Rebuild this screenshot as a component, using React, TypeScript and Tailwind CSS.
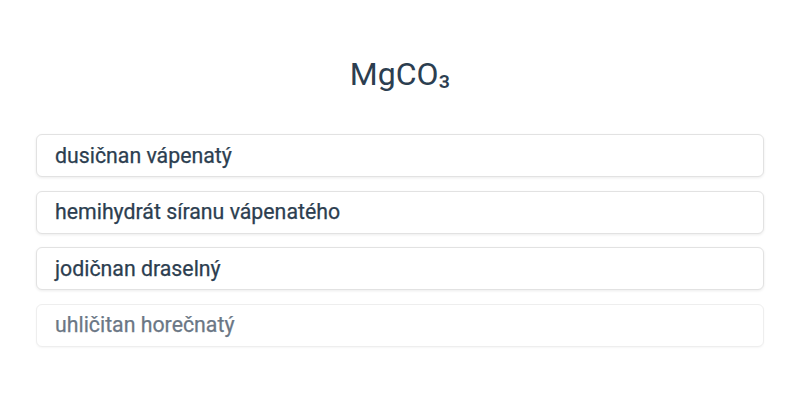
const options = [
  { label: 'dusičnan vápenatý', faded: false },
  { label: 'hemihydrát síranu vápenatého', faded: false },
  { label: 'jodičnan draselný', faded: false },
  { label: 'uhličitan horečnatý', faded: true },
];

export default function App() {
  return (
    <div className="w-[800px] h-[400px] bg-white font-['Roboto',sans-serif]">
      <div className="flex flex-col px-9">
        <h1 className="pt-[51px] text-center text-[32px] leading-[40px] font-normal text-[#2c3e50]">
          MgCO<span className="align-[3px]">₃</span>
        </h1>
        <div className="mt-[40px] flex flex-col gap-[13.5px]">
          {options.map((o) => (
            <div
              key={o.label}
              className={`h-[43px] flex items-center px-[18px] rounded-md bg-white border ${
                o.faded
                  ? 'border-[#eeeeee] shadow-[0_1px_2px_rgba(0,0,0,0.04)] text-[#6b7785]'
                  : 'border-[#e2e2e2] shadow-[0_1px_3px_rgba(0,0,0,0.08)] text-[#2c3e50]'
              }`}
            >
              <span className="text-[21.3px] leading-[28px] font-normal [-webkit-text-stroke:0.25px]">
                {o.label}
              </span>
            </div>
          ))}
        </div>
      </div>
    </div>
  );
}
